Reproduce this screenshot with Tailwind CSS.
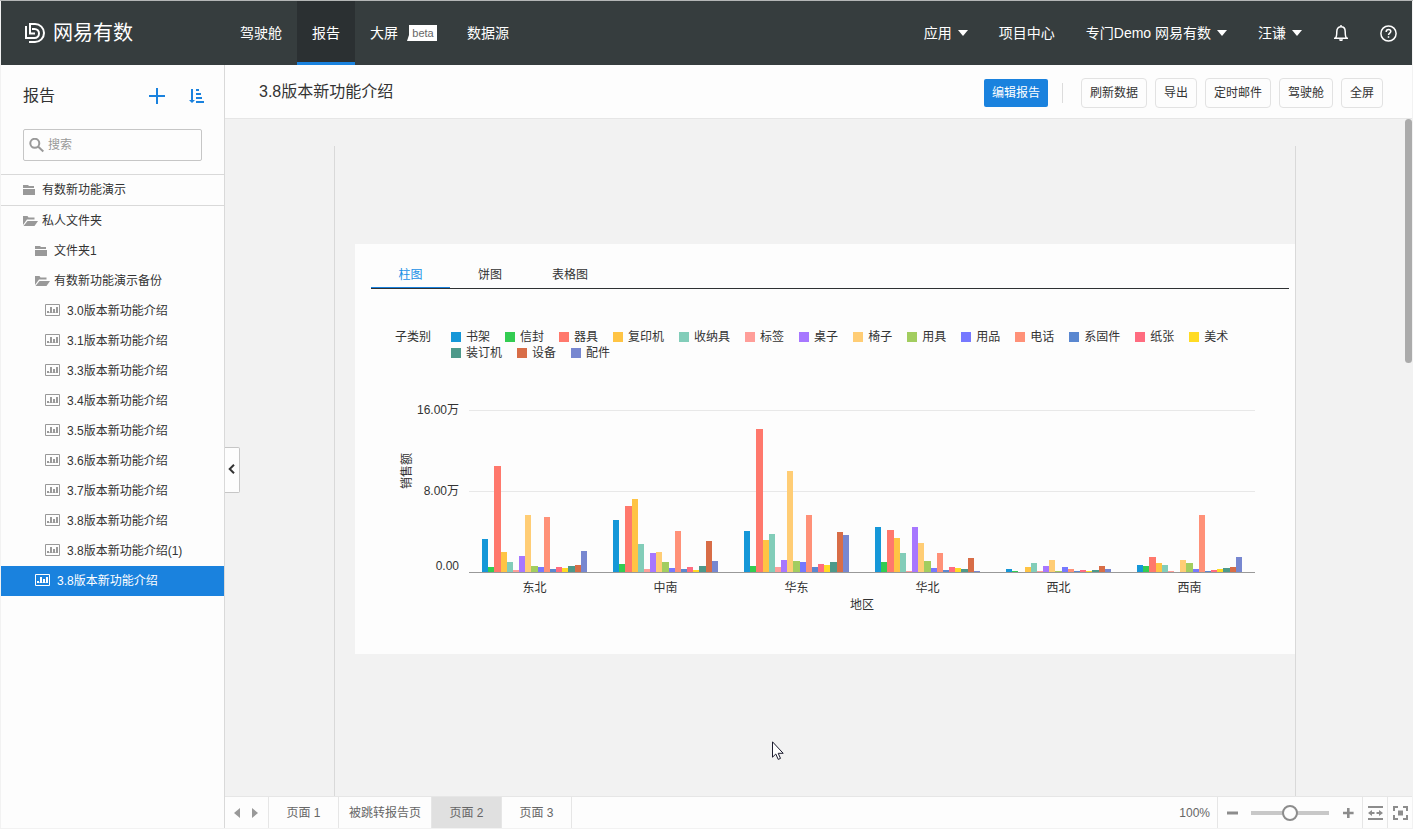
<!DOCTYPE html>
<html lang="zh-CN">
<head>
    <meta charset="UTF-8">
    <meta name="viewport" content="width=device-width, initial-scale=1.0">
    <title>3.8版本新功能介绍 - 网易有数</title>
    <script src="https://cdn.jsdelivr.net/npm/@tailwindcss/browser@4"></script>
    <style>
        body {
            font-family: 'Liberation Sans', 'Noto Sans CJK SC', sans-serif;
        }
    </style>
</head>
<body class="h-screen flex flex-col overflow-hidden bg-[#f2f2f2] border-t border-[#b4b6b6] px-px pb-px text-xs text-[#333]">
    <svg class="hidden">
        <symbol id="folder" viewBox="0 0 12 11">
            <path d="M0 0h5l1 1h5v2H0zM0 4h12v6H0z"/>
        </symbol>
        <symbol id="folder-open" viewBox="0 0 15 11">
            <path d="M0 0h4.500l1 1.500h6v2H4L0 9z"/>
            <path d="M4.500 5H15l-3.500 5H.5z"/>
        </symbol>
        <symbol id="report" viewBox="0 0 15 12">
            <path d="M.5.5h14v11H.5z" fill="none" stroke="currentColor"/>
            <path d="M2 7h2v2H2zM5 3h2v6H5zM8 5h2v4H8zM11 3h2v6h-2z"/>
            <path d="M4 8h7v1H4z" opacity=".5"/>
        </symbol>
        <symbol id="caret" viewBox="0 0 10 6">
            <path d="M0 0h10L5 6z"/>
        </symbol>
    </svg>

    <header class="h-16 shrink-0 flex items-center bg-[#363d3e] text-white text-sm">
        <a href="#" class="w-56 shrink-0 flex items-center gap-2 pl-6 text-xl">
            <svg class="w-5 h-5" viewBox="0 0 20 20" fill="none" stroke="currentColor" stroke-width="2">
                <path d="M1 3v12h8.500a4.500 4.500 0 0 0 0-9H7"/>
                <path d="M10 10.500H5V1h5a9 9 0 0 1 0 18H4"/>
            </svg>
            网易有数
        </a>
        <nav class="h-full flex">
            <a href="#" class="flex items-center px-[15px]">驾驶舱</a>
            <a href="#" class="flex items-center px-[15px] pt-[3px] bg-[#2b3032] border-b-3 border-[#1a82de]">报告</a>
            <a href="#" class="flex items-center gap-[9px] px-[15px]">
                大屏
                <span class="flex items-center">
                    <svg class="w-[2px] h-4" viewBox="0 0 2 16" fill="white"><path d="M2 10v6H0z"/></svg>
                    <span class="w-7 h-4 bg-white text-center text-[11px] leading-4 text-[#666]">beta</span>
                </span>
            </a>
            <a href="#" class="flex items-center px-[15px]">数据源</a>
        </nav>
        <div class="ml-auto flex items-center gap-[31px] pr-[15px]">
            <a href="#" class="flex items-center gap-[6px]">应用 <svg class="w-[10px] h-[6px]" fill="currentColor"><use href="#caret"/></svg></a>
            <a href="#">项目中心</a>
            <a href="#" class="flex items-center gap-[6px]">专门Demo 网易有数 <svg class="w-[10px] h-[6px]" fill="currentColor"><use href="#caret"/></svg></a>
            <a href="#" class="flex items-center gap-[6px]">汪谦 <svg class="w-[10px] h-[6px]" fill="currentColor"><use href="#caret"/></svg></a>
            <button aria-label="通知">
                <svg class="w-4 h-4" viewBox="0 0 16 16" fill="none" stroke="currentColor" stroke-width="1.500">
                    <path d="M1 13.300h14M2.500 13c1-1 1.300-2.500 1.300-6.500C3.800 3.500 5.500 1.800 8 1.800s4.200 1.700 4.200 4.700c0 4 .3 5.500 1.300 6.500M8 0v2"/>
                    <path d="M6 14.300h4L9.300 16H6.700z" fill="currentColor" stroke="none"/>
                </svg>
            </button>
            <button aria-label="帮助">
                <svg class="w-[17px] h-[17px]" viewBox="0 0 17 17" fill="none" stroke="currentColor" stroke-width="1.500">
                    <circle cx="8.500" cy="8.500" r="7.600"/>
                    <path d="M6.200 7c0-1.600 1-2.400 2.300-2.400s2.300.8 2.300 2c0 1.400-2.300 1.500-2.300 3.300M8.500 11.200v1.600"/>
                </svg>
            </button>
        </div>
    </header>

    <div class="flex-1 min-h-0 flex">
        <aside class="w-56 shrink-0 flex flex-col bg-[#fdfdfd] border-r border-[#d9d9d9]">
            <div class="h-[62px] flex items-center pl-[22px] pr-5">
                <h2 class="text-base">报告</h2>
                <button class="ml-auto text-[#1a82de]" aria-label="新建">
                    <svg class="w-4 h-4" viewBox="0 0 16 16" fill="currentColor"><path d="M7 0h2v7h7v2H9v7H7V9H0V7h7z"/></svg>
                </button>
                <button class="ml-6 text-[#1a82de]" aria-label="排序">
                    <svg class="w-[15px] h-4" viewBox="0 0 15 16" fill="currentColor">
                        <path d="M2 1h2v11h2L3 15 0 12h2zM7 1h3v2H7zM7 5h5v2H7zM7 9h6v2H7zM7 13h8v2H7z"/>
                    </svg>
                </button>
            </div>
            <label class="mt-[2px] mx-[22px] h-8 flex items-center gap-1 px-[5px] border border-[#c6c6c6] rounded-xs">
                <svg class="w-[15px] h-[15px] shrink-0" viewBox="0 0 15 15" fill="none" stroke="#999" stroke-width="2">
                    <circle cx="5.800" cy="5.300" r="4.500"/><path d="M9.300 8.800l5 4.700"/>
                </svg>
                <input type="text" placeholder="搜索" aria-label="搜索" class="w-full min-w-0 outline-none placeholder:text-[#999]">
            </label>
            <ul class="mt-[13px] border-t border-[#d9d9d9]">
                <li class="border-b border-[#d9d9d9]">
                    <a href="#" class="h-[30px] flex items-center gap-[7px] pl-[22px]"><svg class="w-3 h-[11px]" fill="#999"><use href="#folder"/></svg>有数新功能演示</a>
                </li>
                <li><a href="#" class="h-[30px] flex items-center gap-1 pl-[22px]"><svg class="w-[15px] h-[11px]" fill="#999"><use href="#folder-open"/></svg>私人文件夹</a></li>
                <li><a href="#" class="h-[30px] flex items-center gap-[7px] pl-[34px]"><svg class="w-3 h-[11px]" fill="#999"><use href="#folder"/></svg>文件夹1</a></li>
                <li><a href="#" class="h-[30px] flex items-center gap-1 pl-[34px]"><svg class="w-[15px] h-[11px]" fill="#999"><use href="#folder-open"/></svg>有数新功能演示备份</a></li>
                <li><a href="#" class="h-[30px] flex items-center gap-[7px] pl-11"><svg class="w-[15px] h-3 mb-[2px] text-[#999]" fill="currentColor"><use href="#report"/></svg>3.0版本新功能介绍</a></li>
                <li><a href="#" class="h-[30px] flex items-center gap-[7px] pl-11"><svg class="w-[15px] h-3 mb-[2px] text-[#999]" fill="currentColor"><use href="#report"/></svg>3.1版本新功能介绍</a></li>
                <li><a href="#" class="h-[30px] flex items-center gap-[7px] pl-11"><svg class="w-[15px] h-3 mb-[2px] text-[#999]" fill="currentColor"><use href="#report"/></svg>3.3版本新功能介绍</a></li>
                <li><a href="#" class="h-[30px] flex items-center gap-[7px] pl-11"><svg class="w-[15px] h-3 mb-[2px] text-[#999]" fill="currentColor"><use href="#report"/></svg>3.4版本新功能介绍</a></li>
                <li><a href="#" class="h-[30px] flex items-center gap-[7px] pl-11"><svg class="w-[15px] h-3 mb-[2px] text-[#999]" fill="currentColor"><use href="#report"/></svg>3.5版本新功能介绍</a></li>
                <li><a href="#" class="h-[30px] flex items-center gap-[7px] pl-11"><svg class="w-[15px] h-3 mb-[2px] text-[#999]" fill="currentColor"><use href="#report"/></svg>3.6版本新功能介绍</a></li>
                <li><a href="#" class="h-[30px] flex items-center gap-[7px] pl-11"><svg class="w-[15px] h-3 mb-[2px] text-[#999]" fill="currentColor"><use href="#report"/></svg>3.7版本新功能介绍</a></li>
                <li><a href="#" class="h-[30px] flex items-center gap-[7px] pl-11"><svg class="w-[15px] h-3 mb-[2px] text-[#999]" fill="currentColor"><use href="#report"/></svg>3.8版本新功能介绍</a></li>
                <li><a href="#" class="h-[30px] flex items-center gap-[7px] pl-11"><svg class="w-[15px] h-3 mb-[2px] text-[#999]" fill="currentColor"><use href="#report"/></svg>3.8版本新功能介绍(1)</a></li>
                <li><a href="#" class="h-[30px] flex items-center gap-[7px] pl-[34px] bg-[#1a82de] text-white"><svg class="w-[15px] h-3 mb-[2px]" fill="currentColor"><use href="#report"/></svg>3.8版本新功能介绍</a></li>
            </ul>
        </aside>

        <main class="relative flex-1 min-w-0 flex flex-col">
            <div class="h-[54px] shrink-0 flex items-center gap-2 pt-[2px] pl-[34px] pr-[29px] bg-[#fdfdfd] border-b border-[#e6e6e6]">
                <h1 class="mr-auto pb-[2px] text-base">3.8版本新功能介绍</h1>
                <button class="h-7 px-2 mr-[6px] rounded-xs bg-[#1a82de] text-white">编辑报告</button>
                <span class="w-px h-5 mr-[10px] bg-[#dcdcdc]"></span>
                <button class="h-[30px] px-2 border border-[#e2e2e2] rounded-sm">刷新数据</button>
                <button class="h-[30px] px-2 border border-[#e2e2e2] rounded-sm">导出</button>
                <button class="h-[30px] px-2 border border-[#e2e2e2] rounded-sm">定时邮件</button>
                <button class="h-[30px] px-2 border border-[#e2e2e2] rounded-sm">驾驶舱</button>
                <button class="h-[30px] px-2 border border-[#e2e2e2] rounded-sm">全屏</button>
            </div>

            <div class="flex-1 min-h-0 flex">
                <div class="flex-1 min-w-0 flex justify-center pt-[27px]">
                    <div class="w-[962px] border-x border-[#d9d9d9]">
                        <section class="mt-[98px] ml-5 px-4 pt-[17px] pb-[41px] bg-[#fdfdfd]">
                            <div class="-mr-[10px] flex h-7 border-b border-[#2e3133]">
                                <button class="w-[79px] pt-px text-[#1890e6] border-b border-[#1a82de]">柱图</button>
                                <button class="w-20">饼图</button>
                                <button class="w-20">表格图</button>
                            </div>

                            <div class="mt-10 mx-6 flex gap-5 leading-4">
                                <span class="shrink-0">子类别</span>
                                <ul id="legend" class="flex flex-wrap gap-x-[15px]"></ul>
                            </div>

                            <div class="mt-[41px] ml-7 mr-6 flex leading-4">
                                <span class="pt-[51px] w-4 h-[88px] [writing-mode:vertical-rl]"><span class="rotate-180 inline-block [text-orientation:sideways]">销售额</span></span>
                                <div class="w-11 text-right">
                                    <div>16.00万</div>
                                    <div class="mt-[65px]">8.00万</div>
                                    <div class="mt-[59px]">0.00</div>
                                </div>
                                <div class="flex-1 mt-2 ml-[10px]">
                                    <div class="relative border-t border-[#e8e8e8]">
                                        <div class="absolute inset-x-0 top-20 h-px bg-[#e8e8e8]"></div>
                                        <div id="plot" class="relative h-[162px] flex border-b border-[#999]"></div>
                                    </div>
                                    <div id="regions" class="mt-[7px] flex text-center"></div>
                                    <div class="mt-px text-center">地区</div>
                                </div>
                            </div>
                        </section>
                    </div>
                </div>
                <div class="w-[7px] h-[244px] shrink-0 rounded-full bg-[#ababab]"></div>
            </div>

            <footer class="h-8 shrink-0 flex items-stretch bg-[#fdfdfd] border-t border-[#e6e6e6] text-[#666]">
                <div class="w-11 flex items-center justify-center gap-3 pr-px border-r border-[#e6e6e6]">
                    <button aria-label="上一页"><svg class="w-[6px] h-[10px]" viewBox="0 0 6 10" fill="#999"><path d="M6 0v10L0 5z"/></svg></button>
                    <button aria-label="下一页"><svg class="w-[6px] h-[10px]" viewBox="0 0 6 10" fill="#999"><path d="M0 0v10l6-5z"/></svg></button>
                </div>
                <button class="w-[70px] border-r border-[#e6e6e6]">页面 1</button>
                <button class="w-[93px] border-r border-[#e6e6e6]">被跳转报告页</button>
                <button class="w-[70px] border-r border-[#e6e6e6] bg-[#e0e0e0]">页面 2</button>
                <button class="w-[70px] border-r border-[#e6e6e6]">页面 3</button>
                <div class="ml-auto flex items-center pr-[7px] border-r border-[#e6e6e6]">100%</div>
                <div class="flex items-center gap-[13px] px-2 border-r border-[#e6e6e6]">
                    <button aria-label="缩小"><svg class="w-3 h-3" viewBox="0 0 12 12" fill="#8c8c8c"><path d="M1 4.500h11v3H1z"/></svg></button>
                    <input type="range" min="0" max="200" value="100" aria-label="缩放" class="w-[78px] h-4 appearance-none bg-transparent [&::-webkit-slider-runnable-track]:h-1 [&::-webkit-slider-runnable-track]:bg-[#c8c8c8] [&::-webkit-slider-thumb]:appearance-none [&::-webkit-slider-thumb]:-mt-[6px] [&::-webkit-slider-thumb]:w-4 [&::-webkit-slider-thumb]:h-4 [&::-webkit-slider-thumb]:rounded-full [&::-webkit-slider-thumb]:border-2 [&::-webkit-slider-thumb]:border-solid [&::-webkit-slider-thumb]:border-[#8c8c8c] [&::-webkit-slider-thumb]:bg-[#fdfdfd]">
                    <button aria-label="放大"><svg class="w-3 h-3" viewBox="0 0 12 12" fill="#8c8c8c"><path d="M1 4.700h4V1h2.600v3.700h4v2.600h-4V11H5V7.300H1z"/></svg></button>
                </div>
                <button class="w-[25px] flex items-center justify-center border-r border-[#e6e6e6]" aria-label="适应宽度">
                    <svg class="w-[15px] h-[14px]" viewBox="0 0 15 14" fill="#8c8c8c"><path d="M0 0h15v2H0zM0 12h15v2H0zM0 7l4-3v2h2.500v2H4v2zM15 7l-4-3v2H8.500v2H11v2z"/></svg>
                </button>
                <button class="w-6 flex items-center justify-center" aria-label="适应页面">
                    <svg class="w-[15px] h-[14px]" viewBox="0 0 15 14"><path d="M1 5V1h4M10 1h4v4M14 9v4h-4M5 13H1V9" fill="none" stroke="#8c8c8c" stroke-width="2"/><path d="M5 4.500h5v5H5z" fill="#8c8c8c"/></svg>
                </button>
            </footer>

            <button class="absolute left-0 top-[382px] w-[15px] h-[46px] flex items-center justify-center pr-px pb-[2px] bg-[#fdfdfd] border border-l-0 border-[#c6c6c6] rounded-r-xs" aria-label="收起">
                <svg class="w-[7px] h-[10px]" viewBox="0 0 7 10" fill="none" stroke="#333" stroke-width="2"><path d="M6 .7L1.700 5 6 9.300"/></svg>
            </button>
        </main>
    </div>

    <!-- mouse pointer -->
    <svg class="absolute left-[772px] top-[741px] w-3 h-[19px]" viewBox="0 0 12 19" fill="white" stroke="#1c1c2e">
        <path d="M.5.8v15.400l3.300-3.200 2.400 5.400 2.300-1-2.300-5.100h5z"/>
    </svg>

    <script>
        const series = [
            ['书架', '#1597d8'], ['信封', '#33cc52'], ['器具', '#ff786c'], ['复印机', '#ffc444'],
            ['收纳具', '#82cdb9'], ['标签', '#ff9e99'], ['桌子', '#a777ff'], ['椅子', '#ffcd75'],
            ['用具', '#a2cd5f'], ['用品', '#7678ff'], ['电话', '#ff9178'], ['系固件', '#5a87d0'],
            ['纸张', '#ff6c80'], ['美术', '#ffdb24'], ['装订机', '#4d998a'], ['设备', '#d86d47'],
            ['配件', '#7787d0']
        ];
        // 销售额，单位：千
        const sales = {
            '东北': [33, 5, 106, 20, 10, 2, 16, 57, 6, 5, 55, 3, 5, 4, 6, 7, 21],
            '中南': [52, 8, 66, 73, 28, 3, 19, 20, 10, 4, 41, 3, 5, 2, 6, 31, 11],
            '华东': [41, 6, 143, 32, 38, 5, 12, 101, 11, 10, 57, 5, 8, 7, 10, 40, 37],
            '华北': [45, 10, 42, 34, 19, 1, 45, 29, 11, 4, 19, 2, 5, 4, 3, 14, 1],
            '西北': [3, 1, 0, 5, 9, 1, 6, 12, 1, 5, 3, 1, 2, 1, 2, 6, 3],
            '西南': [7, 6, 15, 9, 7, 1, 0, 12, 9, 3, 57, 1, 2, 3, 4, 5, 15]
        };

        document.getElementById('legend').innerHTML = series.map(([name, color]) =>
            `<li class="flex items-center gap-[5px]"><span class="w-[10px] h-[10px]" style="background:${color}"></span>${name}</li>`
        ).join('');

        document.getElementById('plot').innerHTML = Object.values(sales).map(values =>
            `<div class="flex-1 flex items-end px-[13px]">${values.map((v, i) =>
                `<div class="flex-1" style="height:${v}px;background:${series[i][1]}"></div>`).join('')}</div>`
        ).join('');

        document.getElementById('regions').innerHTML = Object.keys(sales).map(name =>
            `<span class="flex-1">${name}</span>`
        ).join('');
    </script>
</body>
</html>
